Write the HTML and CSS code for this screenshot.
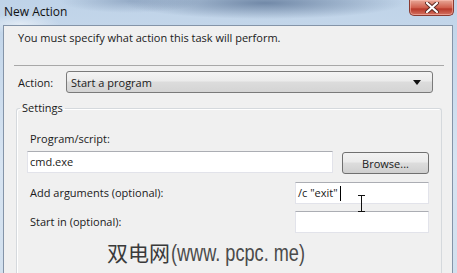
FILE: index.html
```html
<!DOCTYPE html>
<html lang="en">
<head>
    <meta charset="UTF-8">
    <link rel="stylesheet" href="styles.css">
    <title>New Action</title>
</head>
<body>
    <div class="titlebar">
        <div class="title">New Action</div>
        <div class="close">
            <svg width="14" height="11" viewBox="0 0 14 11">
                <path d="M2 1 L12 10 M12 1 L2 10" stroke="#5a2a24" stroke-width="4" stroke-linecap="round"/>
                <path d="M2 1 L12 10 M12 1 L2 10" stroke="#fff" stroke-width="2.2" stroke-linecap="round"/>
            </svg>
        </div>
    </div>
    <div class="window">
        <div class="intro">You must specify what action this task will perform.</div>
        <div class="separator"></div>
        <div class="action-row">
            <span class="action-label">Action:</span>
            <div class="dropdown">
                <span>Start a program</span>
                <svg width="8" height="5" viewBox="0 0 8 5"><path d="M0 0 H8 L4 5 Z" fill="#111"/></svg>
            </div>
        </div>
        <fieldset class="settings">
            <legend>Settings</legend>
            <div class="field-label">Program/script:</div>
            <div class="program-row">
                <div class="input program-input">cmd.exe</div>
                <div class="button">Browse...</div>
            </div>
            <div class="option-row">
                <span class="field-label">Add arguments (optional):</span>
                <div class="input small-input">/c "exit"<span class="caret"></span></div>
            </div>
            <div class="option-row start-row">
                <span class="field-label">Start in (optional):</span>
                <div class="input small-input"></div>
            </div>
        </fieldset>
        <svg class="ibeam" width="9" height="17" viewBox="0 0 9 17">
            <path d="M1 0.5 H8 M1 16.5 H8 M4.5 0.5 V16.5" stroke="#111" stroke-width="1"/>
        </svg>
        <div class="watermark"><span class="wm-cjk">双电网</span><span class="wm-latin">(www. pcpc. me)</span></div>
    </div>
</body>
</html>
```

FILE: styles.css
```css
body {
    margin: 0;
    width: 457px;
    height: 273px;
    overflow: hidden;
    font-family: "Open Sans", "Noto Sans", sans-serif;
    font-size: 11px;
    color: #1a1a1a;
    background:
        radial-gradient(ellipse 140px 16px at 265px 3px, rgba(80, 105, 140, 0.7), rgba(80, 105, 140, 0)),
        radial-gradient(ellipse 70px 12px at 130px 1px, rgba(100, 125, 160, 0.45), rgba(100, 125, 160, 0)),
        radial-gradient(ellipse 40px 10px at 20px 24px, rgba(255, 255, 255, 0.5), rgba(255, 255, 255, 0)),
        linear-gradient(#bfd3e8, #d7e4f2 60%, #d2e0ee);
}

.titlebar {
    height: 25px;
    display: flex;
    justify-content: space-between;
    align-items: flex-start;
}

.title {
    padding: 4px 0 0 4px;
    font-size: 12px;
    line-height: 16px;
    color: #111;
}

.close {
    width: 45px;
    height: 16px;
    margin-right: 3px;
    box-sizing: border-box;
    border: 1px solid #8a3a30;
    border-top: none;
    border-radius: 0 0 5px 5px;
    background: linear-gradient(#e8a898, #d0604e 50%, #b8392a 60%, #d47262);
    box-shadow: inset 0 0 0 1px rgba(255, 200, 190, 0.5);
    display: flex;
    align-items: center;
    justify-content: center;
}

.window {
    position: relative;
    margin-left: 3px;
    width: 450px;
    height: 248px;
    box-sizing: border-box;
    border: 1px solid #8494a8;
    border-bottom: none;
    background: #f0f0f0;
}

.intro {
    padding: 4px 0 19px 14px;
    line-height: 16px;
}

.separator {
    margin: 0 8px 0 10px;
    border-top: 1px solid #a8a8a8;
}

.action-row {
    display: flex;
    align-items: center;
    margin-top: 5px;
    padding-left: 14px;
}

.action-label {
    width: 48px;
}

.dropdown {
    width: 367px;
    height: 22px;
    box-sizing: border-box;
    border: 1px solid #7a7a7a;
    border-radius: 3px;
    background: linear-gradient(#f4f4f4, #ebebeb 45%, #dcdcdc 50%, #d4d4d4);
    display: flex;
    align-items: center;
    justify-content: space-between;
    padding: 0 11px 0 4px;
}

.settings {
    margin: 7px 0 0 12px;
    width: 426px;
    height: 173px;
    box-sizing: border-box;
    border: 1px solid #d5d9dd;
    border-bottom: none;
    border-radius: 3px 3px 0 0;
    padding: 0 12px 0 10px;
    box-shadow: inset 1px 1px 0 #fff;
}

.settings legend {
    margin-left: -7px;
    padding: 0 2px;
    line-height: 16px;
}

.field-label {
    padding-left: 3px;
    line-height: 16px;
}

.settings > .field-label {
    margin-top: 15px;
}

.program-row {
    display: flex;
    gap: 9px;
    margin-top: 4px;
}

.input {
    height: 22px;
    box-sizing: border-box;
    border: 1px solid #e2e3ea;
    border-top-color: #abadb3;
    background: #fff;
    padding: 0 2px;
    line-height: 20px;
    display: flex;
    align-items: center;
}

.program-input {
    flex: 1;
}

.button {
    width: 87px;
    height: 22px;
    margin-top: 1px;
    box-sizing: border-box;
    border: 1px solid #707070;
    border-radius: 3px;
    background: linear-gradient(#f2f2f2, #ebebeb 45%, #dddddd 50%, #cfcfcf);
    display: flex;
    align-items: center;
    justify-content: center;
}

.option-row {
    display: flex;
    justify-content: space-between;
    align-items: center;
    margin-top: 8px;
}

.start-row {
    margin-top: 7px;
}

.small-input {
    width: 134px;
}

.caret {
    width: 1px;
    height: 15px;
    margin-left: 2px;
    background: #000;
}

.ibeam {
    position: absolute;
    left: 353px;
    top: 169px;
}

.watermark {
    position: absolute;
    left: 103px;
    top: 211px;
    width: 240px;
    line-height: 30px;
    color: #3a3a3a;
    white-space: nowrap;
}

.wm-cjk {
    font-family: "Noto Sans CJK SC", sans-serif;
    font-size: 21px;
}

.wm-latin {
    display: inline-block;
    margin-left: 1px;
    font-family: "Liberation Sans", sans-serif;
    font-size: 24px;
    color: #4a4a4a;
    transform: scaleX(0.755);
    transform-origin: 0 50%;
}
```
